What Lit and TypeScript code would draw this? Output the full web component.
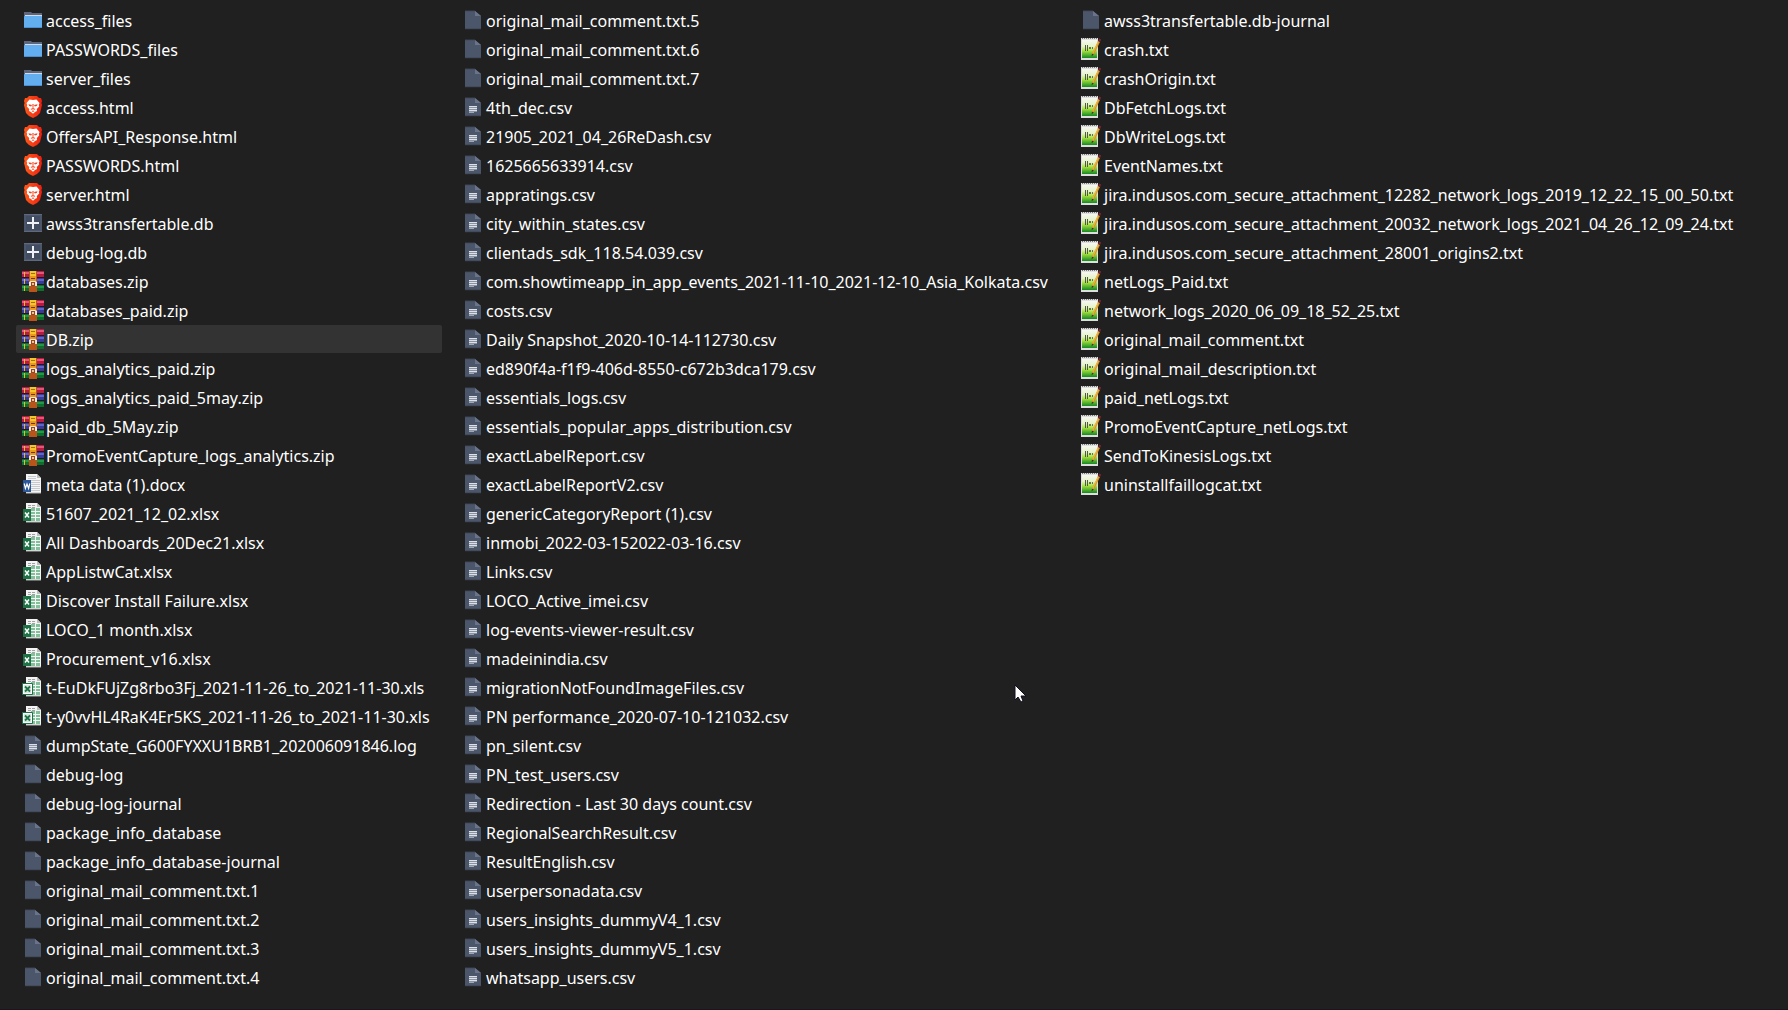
import { LitElement, html, svg, css } from "lit";
import { customElement } from "lit/decorators.js";

type Kind = "folder" | "brave" | "db" | "rar" | "word" | "xlsx" | "xls" | "text" | "blank" | "note";

const sheet = svg`<path d="M3 2h10l6 5v13H3z" fill="#4c566a"/><path d="M3 1.500h10v.7H3zM3 19.500h16v.8H3z" fill="#3a4252"/><path d="M13 2v5h6z" fill="#69748b"/>`;
const page = svg`<path d="M4 1h11l4 4v15H4z" fill="#f4f4f4"/><path d="M15 1v4h4" fill="#bdbdbd"/><path d="M4 20h15" stroke="#b4b4b4"/>`;
const cells = svg`<path d="M6 3h3v1H6zM10 3h3v1h-3zM6 5h3v1H6zM10 5h3v1h-3z" fill="#a2a2a2"/><path d="M9 6h9v13H9z" fill="#82c09c"/><path d="M9 9.500h9M9 12.500h9M9 15.500h9M13.500 6v13" stroke="#f4f4f4"/>`;

const icons: Record<Kind, unknown> = {
  folder: svg`<path d="M2 3h7l1 1h10v5H2z" fill="#5c667d"/><path d="M3 6h17v2H3z" fill="#d5dbe6"/><rect x="2" y="7" width="18" height="12" rx="1" fill="#62aeef"/><path d="M2 18h18v1H2z" fill="#4b8fd0"/>`,
  brave: svg`<defs><linearGradient id="b" x1="0" x2="1"><stop offset="0" stop-color="#ff5a1a"/><stop offset="1" stop-color="#ee1f10"/></linearGradient></defs><path d="M7 0h8l2 2h2l1 3-.6 2 .6 2-2 8-3 3-4 2-4-2-3-3-2-8 .6-2L2 5l1-3h2z" fill="url(#b)"/><path d="M7.500 3.500l3.500.6 3.500-.6L17.500 7l-.7 2 .4 1.500-2.400 2.500.2 2-2 1-2 1.800L9 16l-2-1 .2-2-2.400-2.500L5.200 9l-.7-2z" fill="#fff"/><path d="M6.500 8.200l3.500.8-.8 1.500-2-.5zM15.500 8.200L12 9l.8 1.500 2-.5zM10.400 8h1.200l-.2 4h-.8zM8.500 13l2.500-1 2.500 1-.8.8L11 13.200l-1.700.6zM9.500 15l1.500-.6 1.500.6-1.500 1z" fill="#f4421c"/>`,
  db: svg`<path d="M2 2h18v18H2z" fill="#4c566a"/><path d="M4 4h14v14H4z" fill="#434d61"/><path d="M2 19h18v1H2zM2 2h18v1H2z" fill="#5e6980"/><path d="M5 10h5V5h2v5h5v2h-5v5h-2v-5H5z" fill="#eef1f5"/>`,
  rar: svg`<path d="M0 1h22v7H0z" fill="#b81a40"/><path d="M0 2h22v2H0z" fill="#e2587c"/><path d="M0 8h22v7H0z" fill="#383b96"/><path d="M0 9h22v2H0z" fill="#6265c8"/><path d="M0 15h22v6H0z" fill="#0d6f2b"/><path d="M0 16h22v2H0z" fill="#21994a"/><path d="M0 7h22v1H0zM0 14h22v1H0z" fill="#26142c"/><path d="M2 2h1v5H2zM2 9h1v5H2zM2 16h1v5H2z" fill="#e6bd24"/><rect x="7" y="1" width="8" height="21" fill="#b9541a"/><path d="M8 1h6v5H8z" fill="#f4c52c"/><path d="M9 3h4v1H9z" fill="#ab6b14"/><path d="M8 6h6v6H8z" fill="#ec981f"/><path d="M9 8h4v1H9z" fill="#66380e"/><path d="M7 12l2-1h4l2 1v4H7z" fill="#f4e9d9"/><path d="M9 12h4v4H9z" fill="#9b4520"/><path d="M10 13h2v2h-2z" fill="#eec49a"/>`,
  word: svg`${page}<path d="M6 3.500h8M6 5.500h8M9 7.500h9M9 9.500h9M9 11.500h9M9 13.500h9M9 15.500h9M9 17.500h9" stroke="#c6cace"/><path d="M1 7h8v12H1z" fill="#2b579a"/><path d="M2.200 10.500l1.200 5L5 11l1.600 4.500 1.200-5" fill="none" stroke="#fff" stroke-width="1.200"/>`,
  xlsx: svg`${page}${cells}<path d="M1 7h8v12H1z" fill="#1f7245"/><path d="M3 10.500l4 5M7 10.500l-4 5" stroke="#fff" stroke-width="1.500"/>`,
  xls: svg`${page}${cells}<path d="M.5 7.500h10v11H.5z" fill="#fff" stroke="#1f7245"/><path d="M2 9h7v8H2z" fill="#d3e7dc"/><path d="M3 10.500l5 5M8 10.500l-5 5" stroke="#1f7245" stroke-width="1.800"/>`,
  text: svg`${sheet}<path d="M7 10h8v6H7z" fill="#8a93a4"/><path d="M7 10h8v1H7zM7 12h8v1H7zM7 14h8v1H7z" fill="#dde0e6"/><path d="M7 16h5v1H7z" fill="#a0a8b6"/>`,
  blank: sheet,
  note: svg`<defs><linearGradient id="n" x1="0" y1="0" x2="0" y2="1"><stop offset="0" stop-color="#f6f8f2"/><stop offset=".35" stop-color="#e6f3c6"/><stop offset=".6" stop-color="#a8e23e"/><stop offset="1" stop-color="#148a22"/></linearGradient></defs><path d="M1 0h17v22H1z" fill="#dedede"/><path d="M2 2h15v18H2z" fill="url(#n)"/><path d="M2 .5h15" stroke="#777" stroke-dasharray="1 1"/><path d="M5 7h1v6H5zM7 7h1v6H7z" fill="#4f5a4a"/><path d="M9 9h2v2H9zM12 9h1v2h-1z" fill="#66735c"/><path d="M19 3.500L13 16" stroke="#d9951f" stroke-width="2.200"/><path d="M18.500 3.500L12.500 16" stroke="#f4c152" stroke-width=".8"/><path d="M20.200 1L19 3.500" stroke="#7d2634" stroke-width="2.200"/><path d="M12 15.500l-.4 2.700 2.200-1.800z" fill="#3c3424"/>`,
};

const list = (kind: Kind, names: string) => names.trim().split("\n").map((n) => ({ kind, name: n.trim() }));

const files = [
  ...list("folder", `access_files
    PASSWORDS_files
    server_files`),
  ...list("brave", `access.html
    OffersAPI_Response.html
    PASSWORDS.html
    server.html`),
  ...list("db", `awss3transfertable.db
    debug-log.db`),
  ...list("rar", `databases.zip
    databases_paid.zip
    DB.zip
    logs_analytics_paid.zip
    logs_analytics_paid_5may.zip
    paid_db_5May.zip
    PromoEventCapture_logs_analytics.zip`),
  ...list("word", `meta data (1).docx`),
  ...list("xlsx", `51607_2021_12_02.xlsx
    All Dashboards_20Dec21.xlsx
    AppListwCat.xlsx
    Discover Install Failure.xlsx
    LOCO_1 month.xlsx
    Procurement_v16.xlsx`),
  ...list("xls", `t-EuDkFUjZg8rbo3Fj_2021-11-26_to_2021-11-30.xls
    t-y0vvHL4RaK4Er5KS_2021-11-26_to_2021-11-30.xls`),
  ...list("text", `dumpState_G600FYXXU1BRB1_202006091846.log`),
  ...list("blank", `debug-log
    debug-log-journal
    package_info_database
    package_info_database-journal
    original_mail_comment.txt.1
    original_mail_comment.txt.2
    original_mail_comment.txt.3
    original_mail_comment.txt.4
    original_mail_comment.txt.5
    original_mail_comment.txt.6
    original_mail_comment.txt.7`),
  ...list("text", `4th_dec.csv
    21905_2021_04_26ReDash.csv
    1625665633914.csv
    appratings.csv
    city_within_states.csv
    clientads_sdk_118.54.039.csv
    com.showtimeapp_in_app_events_2021-11-10_2021-12-10_Asia_Kolkata.csv
    costs.csv
    Daily Snapshot_2020-10-14-112730.csv
    ed890f4a-f1f9-406d-8550-c672b3dca179.csv
    essentials_logs.csv
    essentials_popular_apps_distribution.csv
    exactLabelReport.csv
    exactLabelReportV2.csv
    genericCategoryReport (1).csv
    inmobi_2022-03-152022-03-16.csv
    Links.csv
    LOCO_Active_imei.csv
    log-events-viewer-result.csv
    madeinindia.csv
    migrationNotFoundImageFiles.csv
    PN performance_2020-07-10-121032.csv
    pn_silent.csv
    PN_test_users.csv
    Redirection - Last 30 days count.csv
    RegionalSearchResult.csv
    ResultEnglish.csv
    userpersonadata.csv
    users_insights_dummyV4_1.csv
    users_insights_dummyV5_1.csv
    whatsapp_users.csv`),
  ...list("blank", `awss3transfertable.db-journal`),
  ...list("note", `crash.txt
    crashOrigin.txt
    DbFetchLogs.txt
    DbWriteLogs.txt
    EventNames.txt
    jira.indusos.com_secure_attachment_12282_network_logs_2019_12_22_15_00_50.txt
    jira.indusos.com_secure_attachment_20032_network_logs_2021_04_26_12_09_24.txt
    jira.indusos.com_secure_attachment_28001_origins2.txt
    netLogs_Paid.txt
    network_logs_2020_06_09_18_52_25.txt
    original_mail_comment.txt
    original_mail_description.txt
    paid_netLogs.txt
    PromoEventCapture_netLogs.txt
    SendToKinesisLogs.txt
    uninstallfaillogcat.txt`),
];

const ROWS = 34;
const columns = [0, 1, 2].map((c) => files.slice(c * ROWS, (c + 1) * ROWS));

@customElement("app-root")
export class AppRoot extends LitElement {
  static styles = css`
    :host {
      display: block;
      min-height: 100vh;
      box-sizing: border-box;
      background: #202020;
      border-bottom: 1px solid #1c141c;
      color: #fff;
      font: 16px/28px "Noto Sans", "Open Sans", sans-serif;
      overflow: hidden;
      position: relative;
    }
    .files {
      display: grid;
      grid-template-columns: 426px 604px max-content;
      column-gap: 14px;
      padding: 6px 16px;
    }
    .column {
      display: flex;
      flex-direction: column;
      gap: 1px;
      list-style: none;
      margin: 0;
      padding: 0;
    }
    .file {
      display: flex;
      align-items: center;
      gap: 2px;
      height: 28px;
      padding: 0 6px;
      border-radius: 2px;
      white-space: nowrap;
    }
    .hovered {
      background: #333;
    }
    .icon {
      width: 22px;
      height: 22px;
      flex: none;
    }
    .name {
      padding-top: 2px;
    }
    .pointer {
      position: absolute;
      left: 1014px;
      top: 684px;
      width: 13px;
      height: 21px;
    }
  `;

  render() {
    return html`
      <main class="files">
        ${columns.map(
          (items) => html`<ul class="column">
            ${items.map(
              (f) => html`<li class="file ${f.name === "DB.zip" ? "hovered" : ""}">
                <svg class="icon" viewBox="0 0 22 22" aria-hidden="true">${icons[f.kind]}</svg>
                <span class="name">${f.name}</span>
              </li>`
            )}
          </ul>`
        )}
      </main>
      <svg class="pointer" viewBox="0 0 13 21" aria-hidden="true">
        <path d="M1 1v15l3-3 3 5 2-1-2-5h5z" fill="#fff" stroke="#101020"/>
      </svg>
    `;
  }
}
